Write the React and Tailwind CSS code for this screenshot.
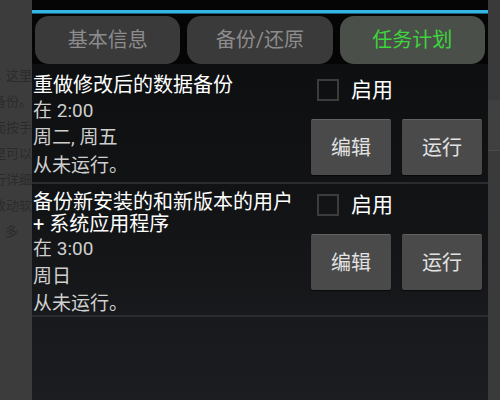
const font = { fontFamily: '"Roboto", "Noto Sans CJK SC", sans-serif' };

const sideLines = ["∴ 这里", "备份。", "而按手", "里可以", "行详细", "改动软", "多"];

const tasks = [
    {
        title: ["重做修改后的数据备份"],
        details: ["在 2:00", "周二, 周五", "从未运行。"],
        height: "h-[118px]",
        leftPad: "pt-[11px]",
        rightPad: "pt-[15px]",
    },
    {
        title: ["备份新安装的和新版本的用户", "+ 系统应用程序"],
        details: ["在 3:00", "周日", "从未运行。"],
        height: "h-[131px]",
        leftPad: "pt-[8px]",
        rightPad: "pt-[10px]",
    },
];

const TaskRow = ({ task }) => {
    return (
        <div className={`flex ${task.height}`}>
            <div className={`flex-1 flex flex-col pl-[1px] ${task.leftPad}`}>
                {task.title.map((line, idx) => (
                    <div key={idx} className="text-[20px] leading-[21.5px] text-white whitespace-nowrap">{line}</div>
                ))}
                {task.details.map((line, idx) => (
                    <div key={idx} className="text-[19px] leading-[27.5px] text-[#cfcfcf]">{line}</div>
                ))}
            </div>
            <div className={`w-[171px] mr-[6px] flex flex-col ${task.rightPad}`}>
                <div className="flex items-center pl-[6px] h-[22px]">
                    <div className="w-[22px] h-[22px] border-2 border-[#3c3c3c]"/>
                    <span className="ml-[12px] text-[21px] text-white leading-none">启用</span>
                </div>
                <div className="flex gap-[11px] mt-[18px]">
                    <button className="w-[80px] h-[56px] bg-[#4a4a4a] border-t border-[#626262] rounded-[2px] shadow-[0_1px_1px_rgba(0,0,0,0.6)] text-[20px] text-[#e2e2e2]">编辑</button>
                    <button className="w-[80px] h-[56px] bg-[#4a4a4a] border-t border-[#626262] rounded-[2px] shadow-[0_1px_1px_rgba(0,0,0,0.6)] text-[20px] text-[#e2e2e2]">运行</button>
                </div>
            </div>
        </div>
    );
}

const App = () => {
    const tabs = ["基本信息", "备份/还原", "任务计划"];

    return (
        <div className="w-[500px] h-[400px] flex bg-[#3c3c3c] overflow-hidden" style={font}>
            {/* dimmed page behind the dialog */}
            <div className="w-[32px] flex flex-col overflow-hidden pt-[66px] gap-[6px]">
                {sideLines.map((line, idx) => (
                    <div key={idx} className="flex justify-end h-[20px] text-[13px] leading-[20px] text-[#2b2b2b] whitespace-nowrap">
                        <span className={idx === 6 ? "mr-[14px]" : ""}>{line}</span>
                    </div>
                ))}
            </div>

            <div className="w-[456px] flex flex-col bg-gradient-to-b from-[#0b0d0f] via-[#111315] to-[#1b1d20]">
                <div className="h-[10px] bg-[#050505]"/>
                <div className="h-[4px] bg-[#33b5e5] border-b border-[#1d5f78]"/>
                <div className="flex gap-[7px] px-[3px] pt-[2px] bg-[#050505]">
                    {tabs.map((tab, idx) => (
                        <div
                            key={tab}
                            className={`flex-1 h-[48px] rounded-[14px] flex items-center justify-center text-[20px] ${idx === 2 ? "bg-[#4a5049] text-[#3ed43e]" : "bg-[#3a3a3a] text-[#8c8c8c]"}`}
                        >
                            {tab}
                        </div>
                    ))}
                </div>

                <TaskRow task={tasks[0]}/>
                <div className="h-[2px] bg-[#2a2c2f]"/>
                <TaskRow task={tasks[1]}/>
                <div className="h-[2px] bg-[#2a2c2f]"/>
            </div>

            <div className="w-[12px] flex flex-col bg-[#3a3a3a]">
                <div className="h-[100px]"/>
                <div className="h-[50px] bg-[#404040]"/>
                <div className="h-[1px] bg-[#4a4a4a]"/>
            </div>
        </div>
    );
}

export default App;
